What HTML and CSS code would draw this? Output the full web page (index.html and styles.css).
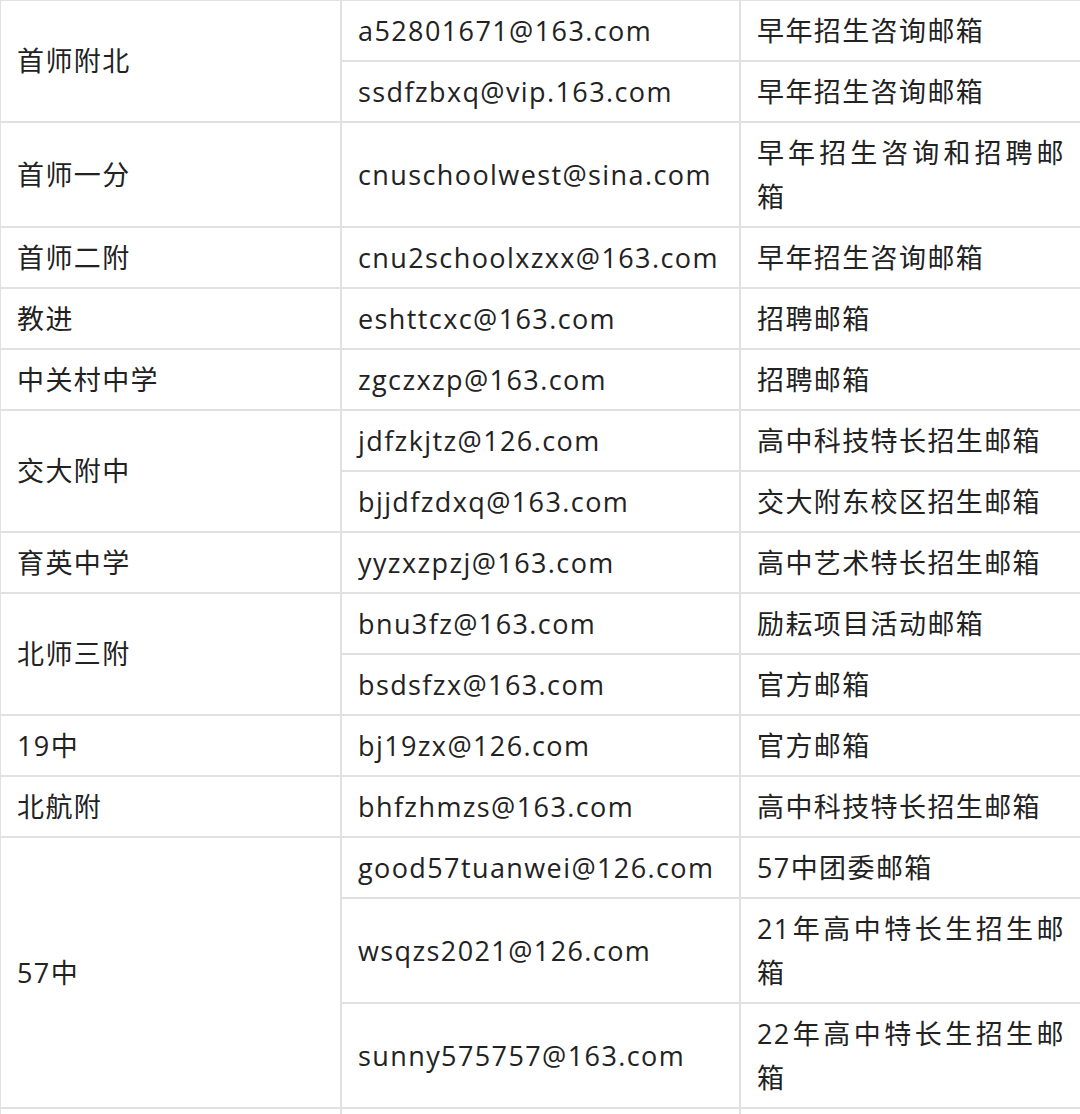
FILE: index.html
```html
<!DOCTYPE html>
<html lang="zh-CN">
<head>
<meta charset="utf-8">
<title>邮箱列表</title>
<link rel="stylesheet" href="styles.css">
</head>
<body>
<table class="mail-table">
  <colgroup>
    <col class="c-school">
    <col class="c-mail">
    <col class="c-note">
  </colgroup>
  <tbody>
    <tr><td rowspan="2">首师附北</td><td>a52801671@163.com</td><td class="note">早年招生咨询邮箱</td></tr>
    <tr><td>ssdfzbxq@vip.163.com</td><td class="note">早年招生咨询邮箱</td></tr>
    <tr><td>首师一分</td><td>cnuschoolwest@sina.com</td><td class="note">早年招生咨询和招聘邮箱</td></tr>
    <tr><td>首师二附</td><td>cnu2schoolxzxx@163.com</td><td class="note">早年招生咨询邮箱</td></tr>
    <tr><td>教进</td><td>eshttcxc@163.com</td><td class="note">招聘邮箱</td></tr>
    <tr><td>中关村中学</td><td>zgczxzp@163.com</td><td class="note">招聘邮箱</td></tr>
    <tr><td rowspan="2">交大附中</td><td>jdfzkjtz@126.com</td><td class="note">高中科技特长招生邮箱</td></tr>
    <tr><td>bjjdfzdxq@163.com</td><td class="note">交大附东校区招生邮箱</td></tr>
    <tr><td>育英中学</td><td>yyzxzpzj@163.com</td><td class="note">高中艺术特长招生邮箱</td></tr>
    <tr><td rowspan="2">北师三附</td><td>bnu3fz@163.com</td><td class="note">励耘项目活动邮箱</td></tr>
    <tr><td>bsdsfzx@163.com</td><td class="note">官方邮箱</td></tr>
    <tr><td>19中</td><td>bj19zx@126.com</td><td class="note">官方邮箱</td></tr>
    <tr><td>北航附</td><td>bhfzhmzs@163.com</td><td class="note">高中科技特长招生邮箱</td></tr>
    <tr><td rowspan="3">57中</td><td>good57tuanwei@126.com</td><td class="note">57中团委邮箱</td></tr>
    <tr><td>wsqzs2021@126.com</td><td class="note">21年高中特长生招生邮箱</td></tr>
    <tr><td>sunny575757@163.com</td><td class="note">22年高中特长生招生邮箱</td></tr>
    <tr class="tail"><td>&nbsp;</td><td>&nbsp;</td><td>&nbsp;</td></tr>
  </tbody>
</table>
</body>
</html>
```
FILE: styles.css
```css
html, body {
  margin: 0;
  padding: 0;
  background: #ffffff;
}

body {
  font-family: "Open Sans", "Noto Sans CJK SC", sans-serif;
  font-size: 27px;
  letter-spacing: 1.4px;
  color: #222222;
}

.mail-table {
  width: 1081px;
  border-collapse: collapse;
  table-layout: fixed;
  margin-top: -1px;
  margin-left: -1px;
}

.c-school { width: 341px; }
.c-mail { width: 399px; }
.c-note { width: 341px; }

.mail-table td {
  border: 2px solid #e1e1e1;
  padding: 7.5px 16px 7.5px 16px;
  line-height: 44px;
  vertical-align: middle;
  text-align: left;
  word-break: break-all;
}

.mail-table td.note {
  text-align: justify;
  padding-right: 15px;
}
```
